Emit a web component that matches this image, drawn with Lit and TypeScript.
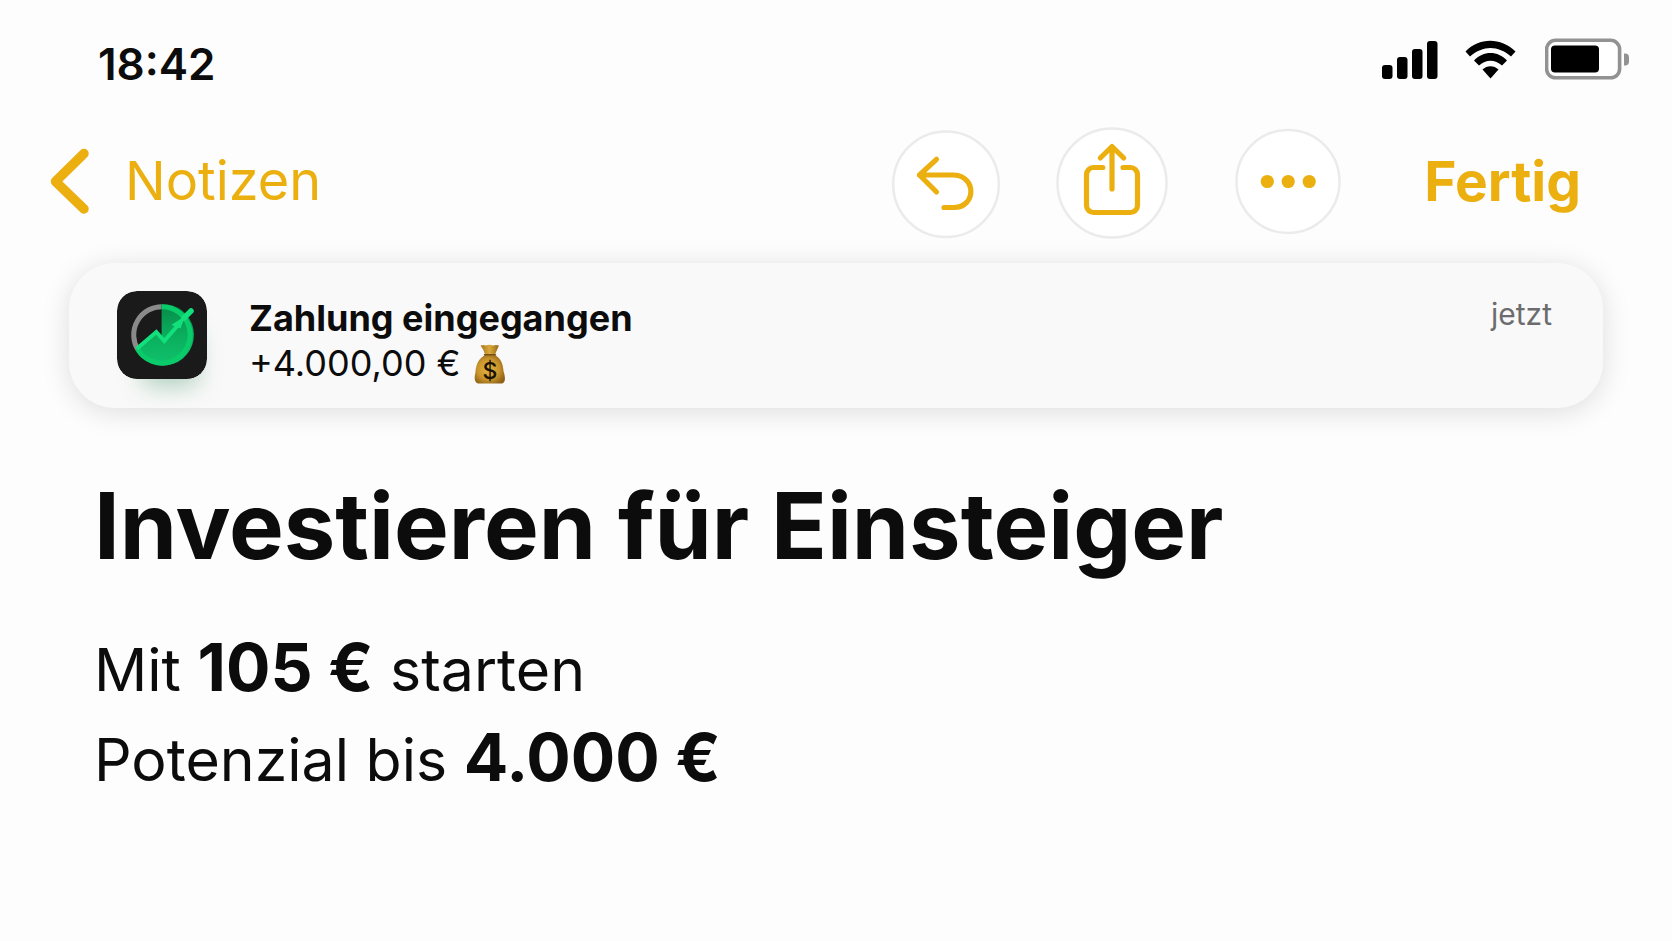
import { LitElement, html, css, svg } from "lit";
import { customElement } from "lit/decorators.js";

@customElement("status-bar")
class StatusBar extends LitElement {
  static styles = css`
    :host {
      display: flex;
      justify-content: space-between;
      align-items: flex-start;
      padding: 38px 43px 0 98px;
    }
    .time {
      font-size: 44px;
      line-height: 53px;
      font-weight: 600;
    }
    .indicators {
      display: flex;
      align-items: center;
      gap: 27px;
    }
    svg {
      display: block;
    }
  `;
  render() {
    return html`
      <time class="time">18:42</time>
      <div class="indicators">
        <svg width="56" height="42" viewBox="0 0 56 42" role="img" aria-label="Mobilfunk">
          <rect x="0" y="27" width="10.5" height="14" rx="3" />
          <rect x="15" y="19" width="10.500" height="22" rx="3" />
          <rect x="30" y="11" width="10.500" height="30" rx="3" />
          <rect x="45" y="3" width="10.500" height="38" rx="3" />
        </svg>
        <svg width="53" height="42" viewBox="0 0 53 42" role="img" aria-label="WLAN">
          <path d="M.5 13.500C14-1 36-1 50.500 13.500L46 18.500C33 7 18 7 5 18.500Z" />
          <path d="M9 22.500C18 12.500 33 12.500 42 22.500L37 27.500C30 21 21 21 14 27.500Z" />
          <path d="M17.500 31.500C22 27 29 27 33.500 31.500L25.500 40.500Z" />
        </svg>
        <svg width="84" height="42" viewBox="0 0 84 42" role="img" aria-label="Batterie">
          <rect x="1.600" y="2.300" width="73" height="37.500" rx="9" fill="#fff" stroke="#929292" stroke-width="3.600" />
          <rect x="6" y="7.500" width="48" height="27" rx="4" />
          <path d="M79 15.500h1a4 4 0 0 1 4 4v4a4 4 0 0 1-4 4h-1z" fill="#929292" />
        </svg>
      </div>
    `;
  }
}

@customElement("nav-bar")
class NavBar extends LitElement {
  static styles = css`
    :host {
      display: flex;
      justify-content: space-between;
      align-items: center;
      padding: 36px 91px 0 50px;
      color: #ebb010;
    }
    button {
      font: inherit;
      color: inherit;
      background: none;
      border: 0;
      padding: 0;
      cursor: pointer;
    }
    svg {
      display: block;
      fill: none;
      stroke: currentColor;
      stroke-linecap: round;
      stroke-linejoin: round;
    }
    .back {
      display: flex;
      align-items: center;
      gap: 35px;
      padding-bottom: 4px;
      font-size: 54px;
      line-height: 68px;
      color: inherit;
      text-decoration: none;
    }
    .actions {
      display: flex;
      align-items: center;
      gap: 64px;
    }
    .tools {
      display: flex;
      gap: 54px;
    }
    .done {
      font-size: 55px;
      line-height: 66px;
      font-weight: 700;
      margin-left: 16px;
      padding-bottom: 4px;
    }
    .ring {
      fill: #fff;
      stroke: #ebebeb;
      stroke-width: 2.500;
    }
    .dots {
      fill: currentColor;
      stroke: none;
    }
  `;
  render() {
    return html`
      <a class="back" href="#notizen">
        <svg width="40" height="66" viewBox="0 0 40 66" stroke-width="9.500" aria-hidden="true">
          <path d="M34 5.500L5.500 33.500L34 61" />
        </svg>
        <span>Notizen</span>
      </a>
      <div class="actions">
        <div class="tools">
          <button aria-label="Widerrufen">
            <svg width="112" height="112" viewBox="0 0 112 112" stroke-width="5.200">
              <circle class="ring" cx="56" cy="57.300" r="52.800" />
              <path d="M46.500 32.300L29.500 48L46.500 65M29.500 48H64C86.500 49 86.500 80 64 80.500H54" />
            </svg>
          </button>
          <button aria-label="Teilen">
            <svg width="112" height="112" viewBox="0 0 112 112" stroke-width="5.200">
              <circle class="ring" cx="56" cy="56" r="54.500" />
              <path d="M56 62V20.500M44.300 31L56 19.500L67.700 31M46.800 40.500H37.500A7 7 0 0 0 30.500 47.500V78.500A7 7 0 0 0 37.500 85.500H74.500A7 7 0 0 0 81.500 78.500V47.500A7 7 0 0 0 74.500 40.500H67" />
            </svg>
          </button>
        </div>
        <button aria-label="Mehr">
          <svg width="112" height="112" viewBox="0 0 112 112">
            <circle class="ring" cx="56" cy="54.500" r="51.500" />
            <g class="dots">
              <circle cx="35.300" cy="54.500" r="6.600" />
              <circle cx="56.200" cy="54.500" r="6.600" />
              <circle cx="77.200" cy="54.500" r="6.600" />
            </g>
          </svg>
        </button>
        <button class="done">Fertig</button>
      </div>
    `;
  }
}

const moneyBag = svg`
  <defs>
    <radialGradient id="sack" cx=".45" cy=".5" r=".6">
      <stop offset="0" stop-color="#e6b540" />
      <stop offset=".6" stop-color="#c8942c" />
      <stop offset="1" stop-color="#8f6216" />
    </radialGradient>
    <linearGradient id="neck" x1="0" x2="1">
      <stop offset="0" stop-color="#a87620" />
      <stop offset=".5" stop-color="#dba93a" />
      <stop offset="1" stop-color="#94661a" />
    </linearGradient>
  </defs>
  <path d="M6.500 1.500Q10 .5 12 1.500Q15.500 0 19 1.500Q22 .5 25 1.500Q23 6 21 10.500H11Q10 6 6.500 1.500Z" fill="url(#neck)" />
  <path d="M11 11H21C27 14.500 29 20 29.500 27Q33 38 28 39.500H4Q-1 38 1.500 28C2 20 5 14.500 11 11Z" fill="url(#sack)" />
  <path d="M10.500 10.700H21.500" stroke="#7a5014" stroke-width="1.500" stroke-linecap="round" />
  <text x="16" y="34.500" text-anchor="middle" font-size="23" font-weight="500" fill="#1a1204">$</text>
`;

@customElement("payment-notification")
class PaymentNotification extends LitElement {
  static styles = css`
    :host {
      display: flex;
      align-items: flex-start;
      gap: 42px;
      margin: 24px 69px 0;
      padding: 28px 51px 22px 48px;
      border-radius: 46px;
      background: #f9f9f9;
      box-shadow: 0 4px 28px rgba(0, 0, 0, 0.13);
    }
    svg {
      display: block;
    }
    .app-icon {
      border-radius: 20px;
      box-shadow: 8px 24px 24px -18px rgba(20, 120, 65, 0.35);
    }
    .message {
      flex: 1;
      padding-top: 5px;
      font-size: 36px;
      line-height: 45px;
    }
    .heading {
      margin: 0;
      font-size: 36px;
      font-weight: 700;
    }
    .amount {
      display: flex;
      align-items: center;
      gap: 13px;
      margin: 0;
    }
    .when {
      padding-top: 4px;
      font-size: 30px;
      line-height: 38px;
      color: #6c6c6e;
    }
  `;
  render() {
    return html`
      <svg class="app-icon" width="90" height="88" viewBox="0 0 90 88" role="img" aria-label="Depot">
        <defs>
          <linearGradient id="area" x1="0" y1="0" x2="0" y2="1">
            <stop offset="0" stop-color="#078a48" />
            <stop offset=".5" stop-color="#0aae5d" />
            <stop offset="1" stop-color="#10c26c" />
          </linearGradient>
        </defs>
        <rect width="90" height="88" rx="20" fill="#1a1a1a" />
        <path d="M44.600 15.700A28.200 28.200 0 0 0 20.500 58" fill="none" stroke="#8a8a8a" stroke-width="5" />
        <path d="M44.600 13.200A30.700 30.700 0 1 1 19 58L39.300 41L44.600 46Z" fill="url(#area)" />
        <path d="M44.600 15.700A28.200 28.200 0 1 1 20.500 58" fill="none" stroke="#0acb69" stroke-width="5" />
        <path d="M19.500 58L39.300 41L47.300 50L62 33" fill="none" stroke="#12e07c" stroke-width="4" />
        <path d="M54.300 34L68 25L63.500 37.500Z" fill="#12e07c" />
        <path d="M67 27L74 20" stroke="#12e07c" stroke-width="5.500" stroke-linecap="round" />
      </svg>
      <div class="message">
        <h2 class="heading">Zahlung eingegangen</h2>
        <p class="amount">
          <span>+4.000,00 €</span>
          <svg width="32" height="40" viewBox="0 0 32 40" role="img" aria-label="Geldsack">${moneyBag}</svg>
        </p>
      </div>
      <span class="when">jetzt</span>
    `;
  }
}

@customElement("app-root")
class AppRoot extends LitElement {
  static styles = css`
    :host {
      display: block;
      min-height: 100vh;
      background: #fdfdfd;
      color: #0c0c0c;
      font-family: Inter, "Liberation Sans", sans-serif;
    }
    .note {
      padding: 62px 94px 0;
    }
    .title {
      margin: 0;
      font-size: 92px;
      line-height: 112px;
      font-weight: 700;
    }
    .body {
      margin: 43px 0 0;
      font-size: 59px;
      line-height: 90px;
    }
    .line {
      margin: 0;
    }
    .sum {
      font-size: 66px;
      line-height: 66px;
      font-weight: 700;
    }
  `;
  render() {
    return html`
      <status-bar></status-bar>
      <nav-bar></nav-bar>
      <payment-notification></payment-notification>
      <main class="note">
        <h1 class="title">Investieren für Einsteiger</h1>
        <div class="body">
          <p class="line">Mit <strong class="sum">105 €</strong> starten</p>
          <p class="line">Potenzial bis <strong class="sum">4.000 €</strong></p>
        </div>
      </main>
    `;
  }
}
